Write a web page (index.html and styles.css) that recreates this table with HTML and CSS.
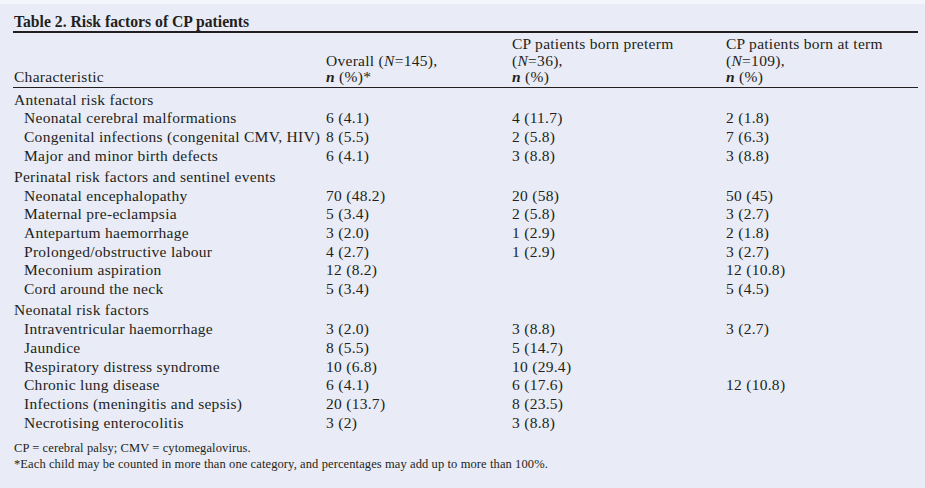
FILE: index.html
```html
<!DOCTYPE html>
<html lang="en">
<head>
<meta charset="utf-8">
<title>Table 2. Risk factors of CP patients</title>
<link rel="stylesheet" href="styles.css">
</head>
<body>
<div class="page">
  <div class="title">Table 2. Risk factors of CP patients</div>
  <table class="risk">
    <colgroup>
      <col class="c1"><col class="c2"><col class="c3"><col class="c4">
    </colgroup>
    <thead>
      <tr>
        <th>Characteristic</th>
        <th>Overall (<i>N</i>=145),<br><b>n</b> (%)*</th>
        <th>CP patients born preterm<br>(<i>N</i>=36),<br><b>n</b> (%)</th>
        <th>CP patients born at term<br>(<i>N</i>=109),<br><b>n</b> (%)</th>
      </tr>
    </thead>
    <tbody>
      <tr class="grp first"><td>Antenatal risk factors</td><td></td><td></td><td></td></tr>
      <tr><td class="ind">Neonatal cerebral malformations</td><td>6 (4.1)</td><td>4 (11.7)</td><td>2 (1.8)</td></tr>
      <tr><td class="ind">Congenital infections (congenital CMV, HIV)</td><td>8 (5.5)</td><td>2 (5.8)</td><td>7 (6.3)</td></tr>
      <tr><td class="ind">Major and minor birth defects</td><td>6 (4.1)</td><td>3 (8.8)</td><td>3 (8.8)</td></tr>
      <tr class="grp"><td>Perinatal risk factors and sentinel events</td><td></td><td></td><td></td></tr>
      <tr><td class="ind">Neonatal encephalopathy</td><td>70 (48.2)</td><td>20 (58)</td><td>50 (45)</td></tr>
      <tr><td class="ind">Maternal pre-eclampsia</td><td>5 (3.4)</td><td>2 (5.8)</td><td>3 (2.7)</td></tr>
      <tr><td class="ind">Antepartum haemorrhage</td><td>3 (2.0)</td><td>1 (2.9)</td><td>2 (1.8)</td></tr>
      <tr><td class="ind">Prolonged/obstructive labour</td><td>4 (2.7)</td><td>1 (2.9)</td><td>3 (2.7)</td></tr>
      <tr><td class="ind">Meconium aspiration</td><td>12 (8.2)</td><td></td><td>12 (10.8)</td></tr>
      <tr><td class="ind">Cord around the neck</td><td>5 (3.4)</td><td></td><td>5 (4.5)</td></tr>
      <tr class="grp"><td>Neonatal risk factors</td><td></td><td></td><td></td></tr>
      <tr><td class="ind">Intraventricular haemorrhage</td><td>3 (2.0)</td><td>3 (8.8)</td><td>3 (2.7)</td></tr>
      <tr><td class="ind">Jaundice</td><td>8 (5.5)</td><td>5 (14.7)</td><td></td></tr>
      <tr><td class="ind">Respiratory distress syndrome</td><td>10 (6.8)</td><td>10 (29.4)</td><td></td></tr>
      <tr><td class="ind">Chronic lung disease</td><td>6 (4.1)</td><td>6 (17.6)</td><td>12 (10.8)</td></tr>
      <tr><td class="ind">Infections (meningitis and sepsis)</td><td>20 (13.7)</td><td>8 (23.5)</td><td></td></tr>
      <tr><td class="ind">Necrotising enterocolitis</td><td>3 (2)</td><td>3 (8.8)</td><td></td></tr>
    </tbody>
  </table>
  <div class="notes">
    <p>CP = cerebral palsy; CMV = cytomegalovirus.</p>
    <p>*Each child may be counted in more than one category, and percentages may add up to more than 100%.</p>
  </div>
</div>
</body>
</html>
```

FILE: styles.css
```css
html, body {
  margin: 0;
  padding: 0;
  background: #e9ecf6;
}
body {
  border-top: 4px solid #f4f5fa;
  font-family: "Liberation Serif", "Times New Roman", serif;
  color: #231f20;
}
.page {
  width: 905px;
  margin-left: 13px;
}
.title {
  font-weight: bold;
  font-size: 15.7px;
  line-height: 18px;
  padding: 9px 0 0 1px;
  border-bottom: 2px solid #231f20;
}
.risk {
  width: 905px;
  border-collapse: collapse;
  table-layout: fixed;
  font-size: 15.5px;
  letter-spacing: 0.28px;
}
.c1 { width: 313px; }
.c2 { width: 186px; }
.c3 { width: 214px; }
.c4 { width: 192px; }
.risk th {
  font-weight: normal;
  text-align: left;
  vertical-align: bottom;
  line-height: 16.5px;
  padding: 3px 0 1px 0;
  border-bottom: 1px solid #231f20;
}
.risk th:first-child { padding-left: 1px; }
.risk th b { font-style: italic; font-weight: bold; }
.risk td {
  padding: 0;
  line-height: 18.7px;
  height: 18.7px;
  vertical-align: middle;
  white-space: nowrap;
}
.risk td:first-child { padding-left: 1px; }
.risk td.ind { padding-left: 11px; }
.risk tr.grp td { padding-top: 2.6px; }
.risk tr.grp.first td { padding-top: 3px; }
.notes {
  font-size: 12.5px;
  letter-spacing: 0.1px;
  line-height: 16px;
  margin-top: 8px;
  padding-left: 1px;
}
.notes p { margin: 0; }
```
